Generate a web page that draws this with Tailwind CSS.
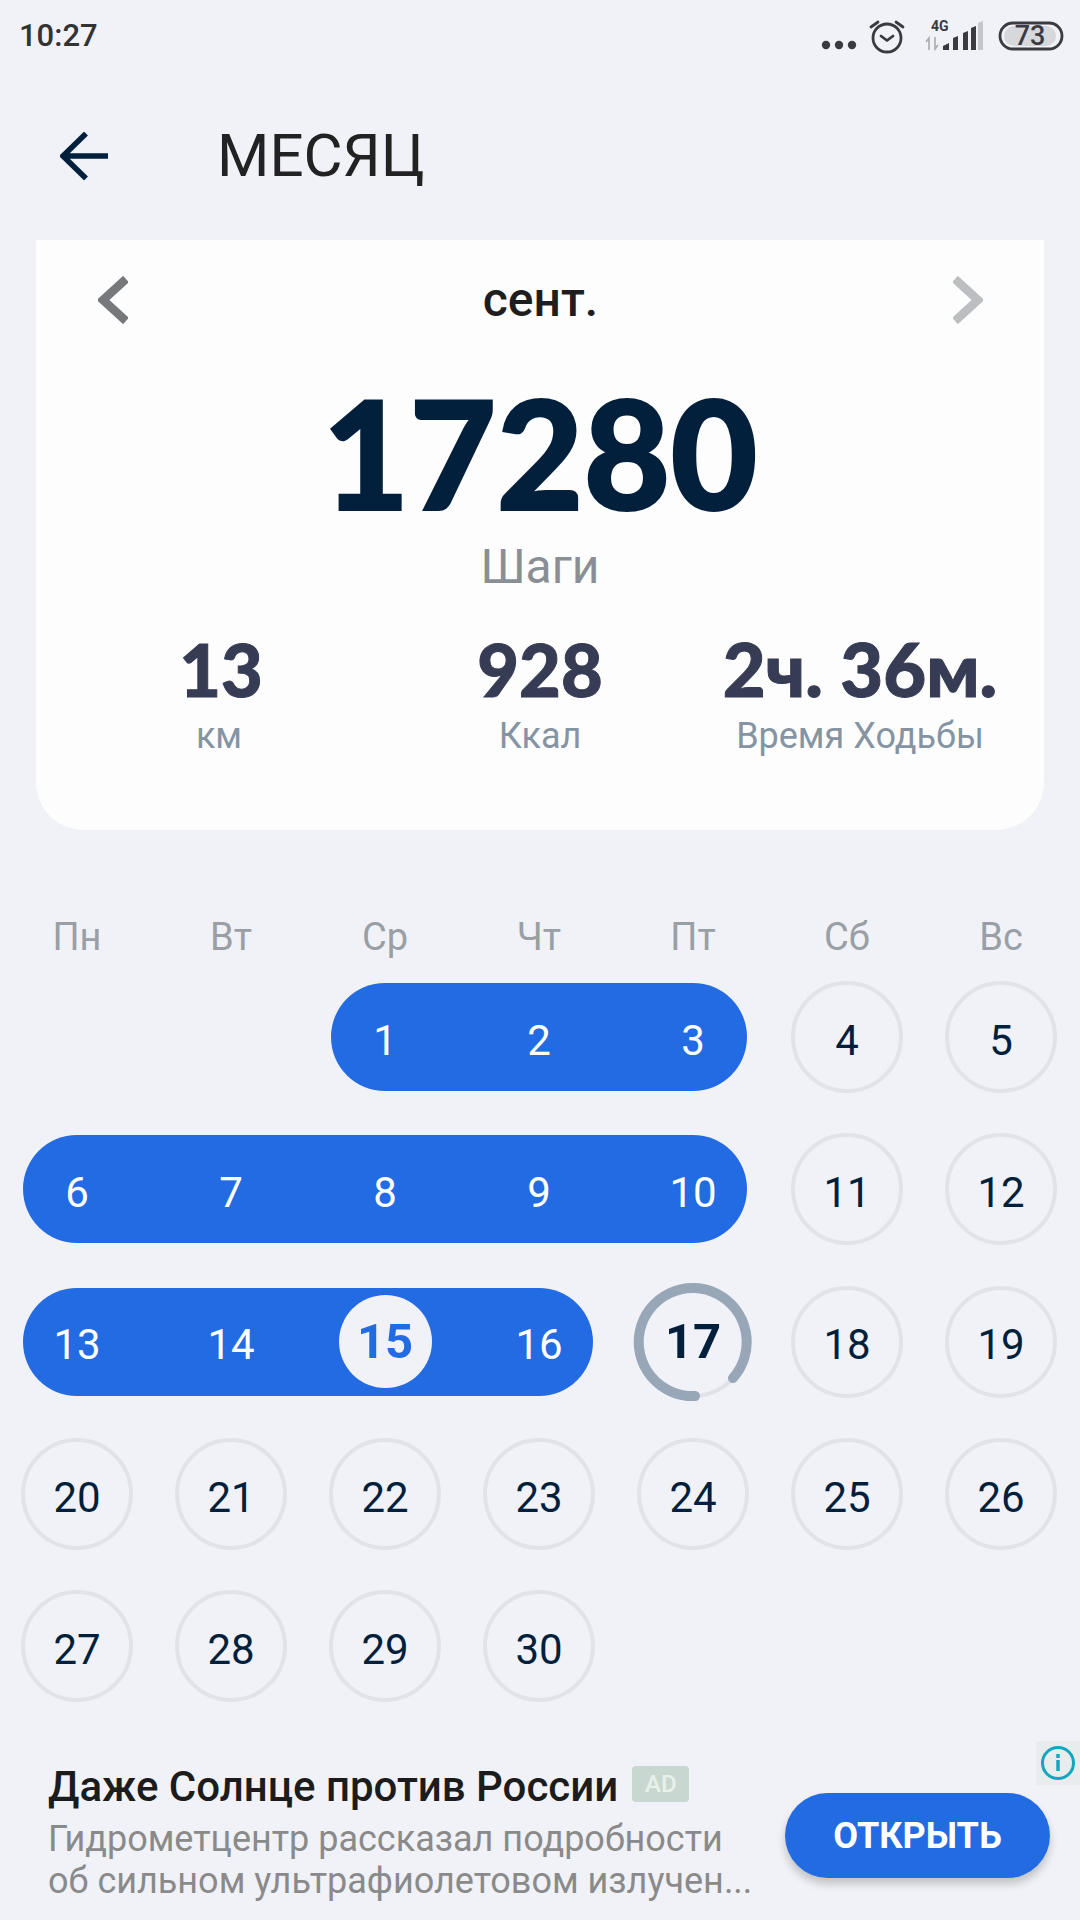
<!DOCTYPE html>
<html lang="ru">
<head>
<meta charset="utf-8">
<script src="https://cdn.jsdelivr.net/npm/@tailwindcss/browser@4"></script>
</head>
<body class="m-0">
<div class="w-[1080px] h-[1920px] overflow-hidden bg-[#f0f2f7] font-['Roboto',sans-serif] flex flex-col">
  <!-- status bar -->
  <div class="h-[72px] flex items-center justify-between pl-[19px]">
    <span class="text-[31px] leading-[36px] font-medium text-[#333]">10:27</span>
    <svg width="280" height="72" viewBox="800 0 280 72">
      <g fill="#3a3a40"><circle cx="826" cy="45" r="4.2"/><circle cx="839" cy="45" r="4.2"/><circle cx="852" cy="45" r="4.2"/></g>
      <g fill="none" stroke="#3a3a40" stroke-width="2.8" stroke-linecap="round" stroke-linejoin="round">
        <circle cx="887" cy="38" r="14"/><path d="M881 36l6 4.500 6-4.500"/><path d="M871 27l7-5M903 27l-7-5"/>
      </g>
      <text x="931" y="31" font-size="14" font-weight="700" fill="#3a3a40" font-family="Roboto">4G</text>
      <path d="M929 50V38l-3 4M935 37v12l3-4" stroke="#aaa" stroke-width="1.6" fill="none"/>
      <path d="M943 50v-4l6-3v7zM953 50V38l5-2v14zM963 50V33l5-2v19zM971 50V28l5-2v24z" fill="#3a3a40"/>
      <path d="M978 50V23l5-2v29z" fill="#c4c6ca"/>
      <rect x="1004" y="26" width="52" height="20" rx="10" fill="#d6d8dc"/>
      <rect x="1000" y="23" width="62" height="26" rx="13" fill="none" stroke="#3a3a40" stroke-width="2.8"/>
      <text x="1030" y="45" text-anchor="middle" font-size="27" font-weight="500" fill="#3a3a40" font-family="Roboto">73</text>
    </svg>
  </div>
  <!-- header -->
  <div class="h-[168px] flex items-center">
    <svg width="48" height="48" viewBox="0 0 48 48" class="ml-[60px]" fill="none" stroke="#021f3c" stroke-width="5.5">
      <path d="M26 1.500L3 24l23 22.500M3 24h46" />
    </svg>
    <h1 class="ml-[109px] text-[60px] leading-[70px] font-normal text-[#222]">МЕСЯЦ</h1>
  </div>
  <!-- card -->
  <div class="mx-[36px] h-[590px] bg-[#fdfdfe] rounded-b-[48px] flex flex-col items-center relative">
    <div class="w-full h-[118px] flex items-center justify-between pl-[62px] pr-[61px] pt-[1px]">
      <svg width="30" height="48" viewBox="0 0 30 48" fill="none" stroke="#76787c" stroke-width="8.5"><path d="M28 3L5 24l23 21"/></svg>
      <span class="text-[48px] leading-[52px] font-medium text-[#1e1e1e]">сент.</span>
      <svg width="30" height="48" viewBox="0 0 30 48" fill="none" stroke="#bcbec2" stroke-width="8.5"><path d="M2 3l23 21L2 45"/></svg>
    </div>
    <div class="font-['Lato',sans-serif] font-black text-[150px] leading-[130px] text-[#021f3c] mt-[29px] [-webkit-text-stroke:2px_#021f3c]">17280</div>
    <div class="text-[48px] leading-[56px] text-[#8a8f96] mt-[22px]">Шаги</div>
    <div class="w-full grid grid-cols-3 mt-[34px] [&_b]:[-webkit-text-stroke:1px_#373c55]">
      <div class="flex flex-col items-center ml-[34px]"><b class="font-['Lato',sans-serif] font-black text-[72px] leading-[80px] text-[#373c55]">13</b><span class="text-[36px] leading-[42px] text-[#8594a3] mt-[6px] -ml-[4px]">км</span></div>
      <div class="flex flex-col items-center"><b class="font-['Lato',sans-serif] font-black text-[72px] leading-[80px] text-[#373c55]">928</b><span class="text-[36px] leading-[42px] text-[#8594a3] mt-[6px]">Ккал</span></div>
      <div class="flex flex-col items-center whitespace-nowrap ml-[-32px]"><b class="font-['Lato',sans-serif] font-black text-[74px] leading-[80px] text-[#373c55]">2ч. 36м.</b><span class="text-[36px] leading-[42px] text-[#8594a3] mt-[6px]">Время Ходьбы</span></div>
    </div>
  </div>
  <!-- calendar -->
  <div class="w-[1078px] mt-[76px] text-[#021f3c] text-[42px]">
    <div class="grid grid-cols-7 h-[62px] items-center text-center text-[38px] text-[#9a9fa6]">
      <span>Пн</span><span>Вт</span><span>Ср</span><span>Чт</span><span>Пт</span><span>Сб</span><span>Вс</span>
    </div>
    <div class="grid grid-cols-7 auto-rows-[152.3px] items-center justify-items-center -mt-[7px] [&>.d]:w-[112px] [&>.d]:h-[112px] [&>.d]:rounded-full [&>.d]:border-[4px] [&>.d]:border-[#e0e3e8] [&>.d]:flex [&>.d]:items-center [&>.d]:justify-center [&>.d]:pt-[6px]">
      <div class="col-start-3 col-span-3 w-[416px] h-[108px] pt-[6px] rounded-full bg-[#236be3] text-white flex justify-between items-center [&>span]:w-[108px] [&>span]:text-center"><span>1</span><span>2</span><span>3</span></div>
      <div class="d">4</div><div class="d">5</div>
      <div class="col-span-5 w-[724px] h-[108px] pt-[6px] rounded-full bg-[#236be3] text-white flex justify-between items-center [&>span]:w-[108px] [&>span]:text-center"><span>6</span><span>7</span><span>8</span><span>9</span><span>10</span></div>
      <div class="d">11</div><div class="d">12</div>
      <div class="col-span-4 w-[570px] h-[108px] rounded-full bg-[#236be3] text-white flex justify-between items-center [&>span]:w-[108px] [&>span]:text-center">
        <span class="pt-[6px]">13</span><span class="pt-[6px]">14</span>
        <span class="flex justify-center"><b class="w-[93px] h-[93px] rounded-full bg-[#f0f2f7] text-[#236be3] flex items-center justify-center font-bold text-[49px]">15</b></span>
        <span class="pt-[6px]">16</span>
      </div>
      <div class="relative w-[120px] h-[120px] flex items-center justify-center font-bold text-[49px]">
        <svg class="absolute inset-0" width="120" height="120" viewBox="0 0 120 120" fill="none" stroke-width="10" stroke-linecap="round">
          <circle cx="60" cy="60" r="54" stroke="#dfe2e7" stroke-width="4"/>
          <path d="M100 96A54 54 0 1 0 62 114" stroke="#98a7b8"/>
        </svg>
        <span class="relative">17</span>
      </div>
      <div class="d">18</div><div class="d">19</div>
      <div class="d">20</div><div class="d">21</div><div class="d">22</div><div class="d">23</div><div class="d">24</div><div class="d">25</div><div class="d">26</div>
      <div class="d">27</div><div class="d">28</div><div class="d">29</div><div class="d">30</div>
    </div>
  </div>
  <!-- ad -->
  <div class="relative flex-1 flex items-start">
    <div class="pl-[48px] pt-[40px] w-[780px]">
      <div class="flex items-center h-[50px]">
        <span class="text-[42px] leading-[50px] font-medium text-[#1c1c1c] whitespace-nowrap">Даже Солнце против России</span>
        <span class="ml-[14px] w-[57px] h-[36px] -mt-[6px] rounded-[4px] bg-[#c8d8d0] text-[#e8f0ec] text-[24px] leading-[36px] text-center font-medium">AD</span>
      </div>
      <div class="text-[36px] leading-[42px] text-[#8a8a8a] mt-[6px] whitespace-nowrap">Гидрометцентр рассказал подробности<br>об сильном ультрафиолетовом излучен...</div>
    </div>
    <div class="absolute left-[785px] top-[71px] w-[265px] h-[85px] rounded-full bg-[#236be3] text-white font-bold text-[36px] flex items-center justify-center shadow-[0_6px_8px_rgba(0,0,0,0.2)]">ОТКРЫТЬ</div>
    <div class="absolute right-0 top-[19px] w-[44px] h-[44px] bg-[#e8ecec] flex items-center justify-center">
      <svg width="36" height="36" viewBox="0 0 36 36" fill="none" stroke="#14a5c0" stroke-width="3"><circle cx="18" cy="18" r="15.500"/><path d="M18 15v11M18 9v4" stroke-width="3.500"/></svg>
    </div>
  </div>
</div>
</body>
</html>
